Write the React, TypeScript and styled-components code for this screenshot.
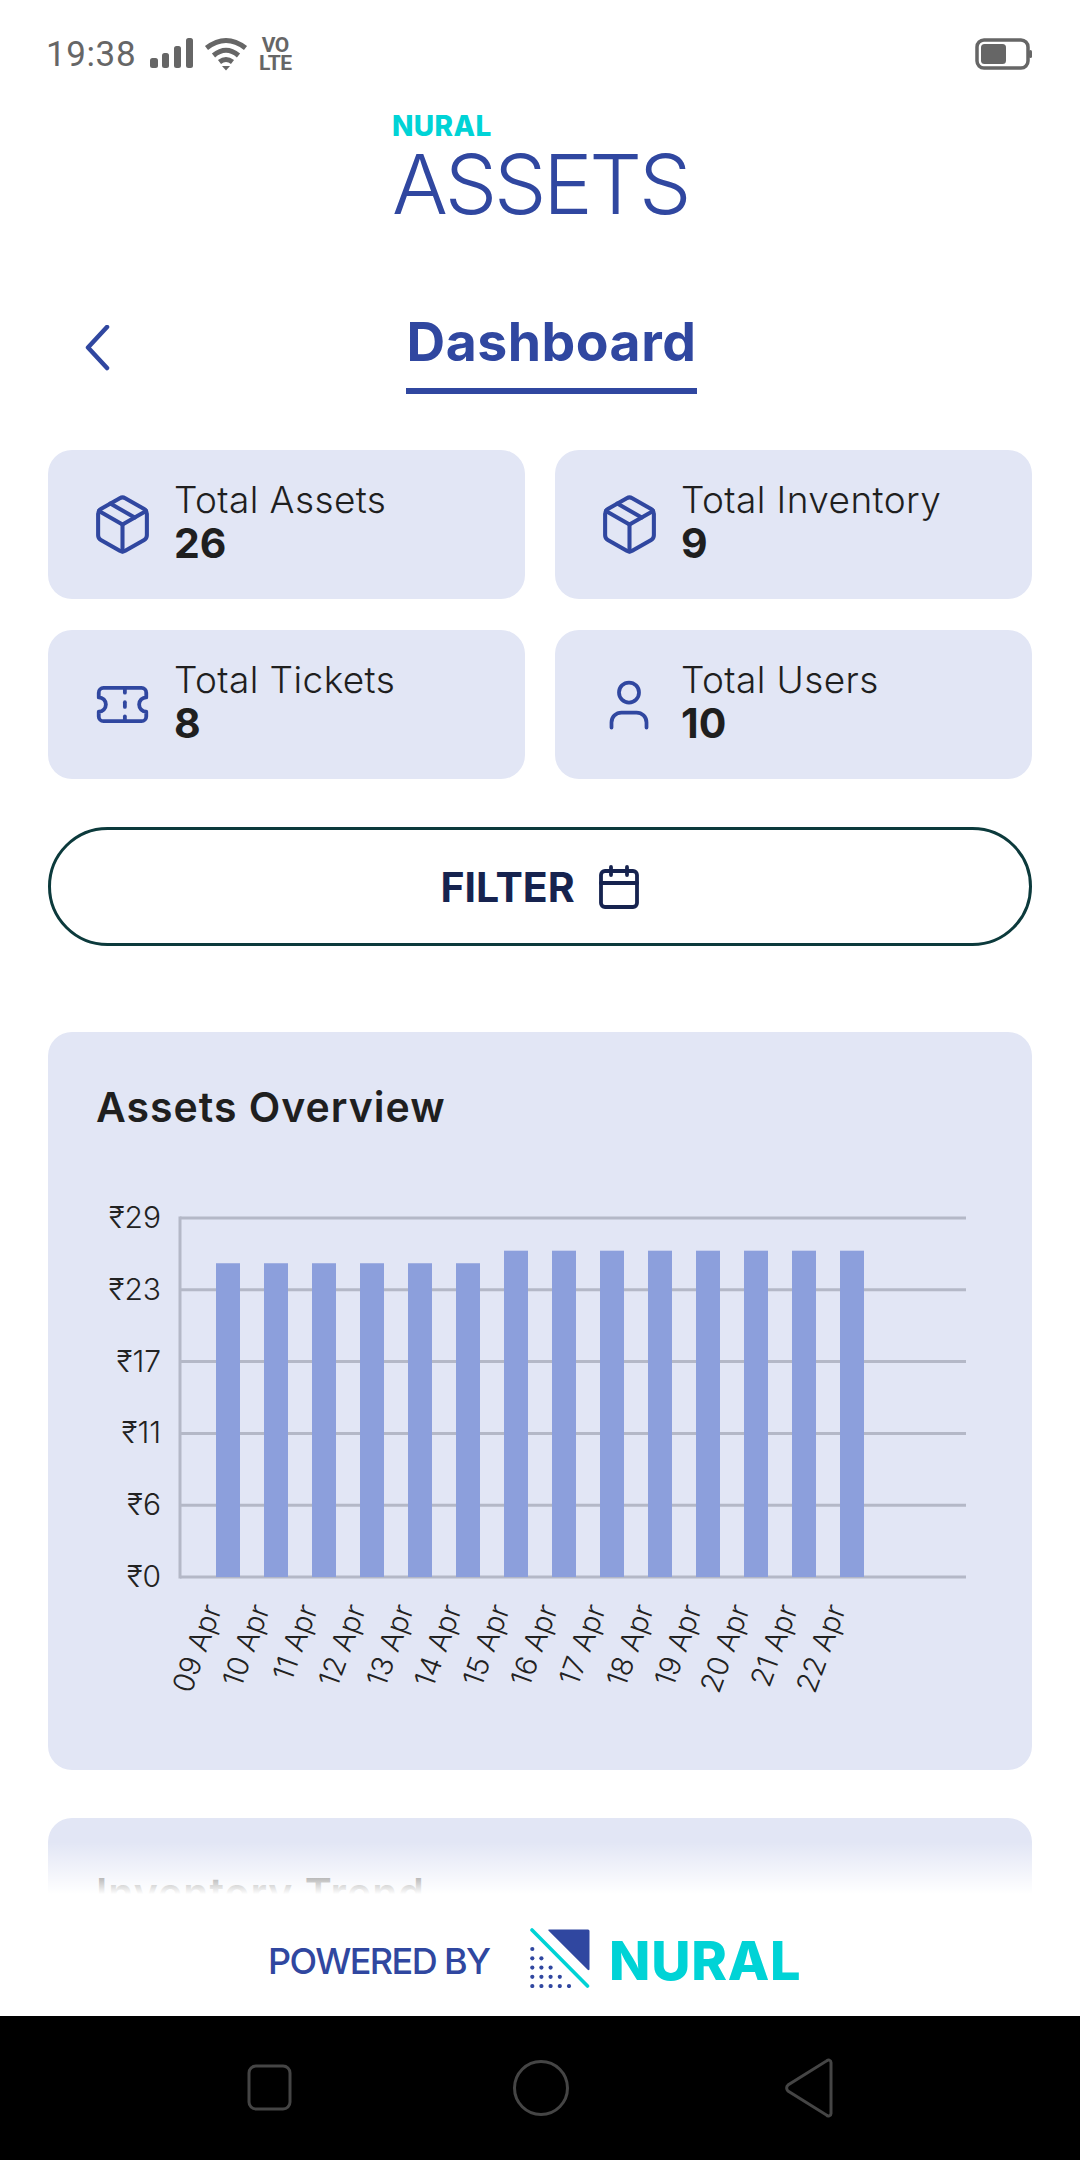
import React from "react";
import styled, { createGlobalStyle } from "styled-components";
import { Calendar, Package, Ticket, User } from "lucide-react";

const BLUE = "#3047a0";
const TEAL = "#00d3d6";

const GlobalStyle = createGlobalStyle`
  html, body { margin: 0; padding: 0; background: #fff; }
  * { box-sizing: border-box; }
  body { font-family: Inter, "Noto Sans", sans-serif; }
`;

const Shell = styled.div`
  width: 1080px;
  height: 2160px;
  display: flex;
  flex-direction: column;
  overflow: hidden;
  background: #fff;
`;

const Screen = styled.main`
  height: 1900px;
  flex: none;
  overflow: hidden;
`;

const StatusBar = styled.div`
  height: 108px;
  padding: 0 47px;
  display: flex;
  align-items: center;
  color: #666;
`;

const Time = styled.span`
  font-family: Roboto, sans-serif;
  font-size: 35px;
  width: 104px;
  margin-left: -1px;
  letter-spacing: 0.6px;
`;

const StatusIcon = styled.svg`
  display: block;
  margin-right: 10px;
`;

const Volte = styled.span`
  font-family: Roboto, sans-serif;
  font-weight: 700;
  font-size: 21px;
  line-height: 18px;
  margin-left: 1px;
  text-align: center;
  letter-spacing: -0.4px;
`;

const BatteryIcon = styled.svg`
  display: block;
  margin-left: auto;
`;

const Brand = styled.div`
  width: 296px;
  margin: 3px 0 0 392px;
  display: flex;
  flex-direction: column;
`;

const BrandTop = styled.span`
  color: ${TEAL};
  font-weight: 800;
  font-size: 28px;
  line-height: 31px;
  letter-spacing: 0.4px;
`;

const BrandName = styled.span`
  color: ${BLUE};
  font-weight: 300;
  font-size: 83px;
  line-height: 84px;
  letter-spacing: -3.2px;
`;

const TitleRow = styled.div`
  margin-top: 86px;
  height: 100px;
  padding-left: 84px;
  display: flex;
  align-items: flex-start;
`;

const BackIcon = styled.svg`
  display: block;
  margin: 13px 0 0 0;
`;

const Title = styled.h1`
  margin: 0 0 0 294px;
  padding-bottom: 16px;
  width: 291px;
  text-align: center;
  color: ${BLUE};
  font-size: 53.500px;
  line-height: 60px;
  font-weight: 700;
  letter-spacing: 0.5px;
  white-space: nowrap;
  border-bottom: 6px solid ${BLUE};
`;

const StatGrid = styled.section`
  margin-top: 38px;
  padding: 0 48px;
  display: grid;
  grid-template-columns: 477px 477px;
  grid-auto-rows: 149px;
  gap: 31px 30px;
`;

const StatCard = styled.div`
  background: #e2e6f5;
  border-radius: 24px;
  padding-left: 40px;
  display: flex;
  align-items: center;
  gap: 18px;
  color: #1f1f1f;
`;

const StatIcon = styled.div`
  width: 68px;
  display: flex;
  justify-content: center;
  color: ${BLUE};
`;

const StatText = styled.div`
  display: flex;
  flex-direction: column;
  margin-top: -5px;
`;

const StatLabel = styled.span`
  font-size: 37px;
  font-weight: 300;
  line-height: 42px;
  letter-spacing: 0.4px;
`;

const StatValue = styled.span`
  font-size: 41px;
  font-weight: 700;
  line-height: 45px;
`;

const FilterButton = styled.button`
  display: flex;
  align-items: center;
  justify-content: center;
  gap: 20px;
  width: 984px;
  height: 119px;
  margin: 48px 0 0 48px;
  padding: 0 0 0 3px;
  background: #fff;
  border: 3px solid #0c3a3c;
  border-radius: 60px;
  color: #16234f;
  font-family: inherit;
  font-size: 41px;
  font-weight: 700;
`;

const ChartCard = styled.section`
  width: 984px;
  margin: 86px 0 0 48px;
  padding: 50px 48px 50px;
  background: #e2e6f5;
  border-radius: 24px;

  & + & {
    margin-top: 48px;
  }
`;

const ChartTitle = styled.h2`
  margin: 0;
  color: #1f1f1f;
  font-size: 41px;
  line-height: 50px;
  font-weight: 600;
  letter-spacing: 1px;
`;

const ChartSvg = styled.svg`
  display: block;
  margin-top: 58px;
`;

const Footer = styled.footer`
  position: relative;
  height: 116px;
  flex: none;
  background: #fff;
  padding-left: 268px;
  display: flex;
  align-items: center;

  &::before {
    content: "";
    position: absolute;
    left: 0;
    right: 0;
    bottom: 100%;
    height: 58px;
    background: linear-gradient(to bottom, rgba(255, 255, 255, 0), #fff 90%);
  }
`;

const PoweredBy = styled.span`
  color: ${BLUE};
  font-size: 36px;
  font-weight: 500;
  letter-spacing: -1.6px;
  width: 262px;
  margin-top: 5px;
`;

const NuralWord = styled.span`
  margin: 4px 0 0 19px;
  color: ${TEAL};
  font-size: 54px;
  font-weight: 800;
  letter-spacing: 0.8px;
`;

const NavBar = styled.nav`
  flex: 1;
  background: #000;
  padding-left: 4px;
  display: flex;
  align-items: center;
  justify-content: center;
`;

const NavRow = styled.svg`
  display: block;
`;

const stats = [
  { label: "Total Assets", value: "26", icon: <Package size={65} strokeWidth={1.5} /> },
  { label: "Total Inventory", value: "9", icon: <Package size={65} strokeWidth={1.5} /> },
  { label: "Total Tickets", value: "8", icon: <Ticket size={57} strokeWidth={1.6} /> },
  { label: "Total Users", value: "10", icon: <User size={60} strokeWidth={1.5} /> },
];

const days = ["09", "10", "11", "12", "13", "14", "15", "16", "17", "18", "19", "20", "21", "22"];
const values = [25, 25, 25, 25, 25, 25, 26, 26, 26, 26, 26, 26, 26, 26];
const ticks = ["₹29", "₹23", "₹17", "₹11", "₹6", "₹0"];

// svg origin sits at x=96 on the page
const GRID_TOP = 28;
const GRID_STEP = 71.8;
const GRID_LEFT = 84;
const GRID_RIGHT = 870;
const GRID_BOTTOM = GRID_TOP + GRID_STEP * 5;
const UNIT = 12.55;

function AssetsChart() {
  return (
    <ChartSvg width={888} height={530}>
      {ticks.map((t, i) => (
        <g key={t}>
          <line
            x1={GRID_LEFT}
            x2={GRID_RIGHT}
            y1={GRID_TOP + i * GRID_STEP}
            y2={GRID_TOP + i * GRID_STEP}
            stroke="#b4b8c7"
            strokeWidth={3}
          />
          <text
            x={65}
            y={GRID_TOP + i * GRID_STEP + 10}
            textAnchor="end"
            fontFamily="Inter, sans-serif"
            fontWeight={300}
            fontSize={30}
            fill="#222"
          >
            {t}
          </text>
        </g>
      ))}
      <line x1={GRID_LEFT} x2={GRID_LEFT} y1={GRID_TOP - 1.5} y2={GRID_BOTTOM + 1.5} stroke="#b4b8c7" strokeWidth={3} />
      {values.map((v, i) => (
        <rect key={i} x={120 + i * 48} y={GRID_BOTTOM - v * UNIT} width={24} height={v * UNIT} fill="#8c9fdc" />
      ))}
      {days.map((d, i) => {
        const x = 126 + i * 48;
        const y = GRID_BOTTOM + 32;
        return (
          <text
            key={d}
            x={x}
            y={y}
            textAnchor="end"
            transform={`rotate(-70 ${x} ${y})`}
            fontFamily="Inter, sans-serif"
            fontWeight={300}
            fontSize={29}
            fill="#222"
          >
            {d} Apr
          </text>
        );
      })}
    </ChartSvg>
  );
}

function NuralMark() {
  const dots = [2.3, 11.4, 20.6, 29.8, 39];
  const rows = [21, 30.3, 39.6, 48.8, 58];
  return (
    <svg width={60} height={60} viewBox="0 0 60 60" style={{ display: "block", flex: "none" }}>
      <path d="M19 1.500H58a1.500 1.500 0 0 1 1.500 1.500V41a1 1 0 0 1-1.800 .7L18.400 2.600a.7 .7 0 0 1 .6-1.100Z" fill={BLUE} />
      <line x1={2} y1={2} x2={57.5} y2={58} stroke={TEAL} strokeWidth={3.6} strokeLinecap="round" />
      {rows.map((y, r) =>
        dots.slice(0, r + 1).map((x) => <circle key={`${r}-${x}`} cx={x} cy={y} r={2.1} fill={BLUE} />)
      )}
    </svg>
  );
}

export default function App() {
  return (
    <Shell>
      <GlobalStyle />
      <Screen>
        <StatusBar>
          <Time>19:38</Time>
          <StatusIcon width={44} height={32} viewBox="0 0 44 32" fill="currentColor">
            <rect x={0} y={20} width={8} height={10} rx={2.5} />
            <rect x={12} y={15} width={7} height={15} rx={2.5} />
            <rect x={24} y={8} width={7} height={22} rx={2.5} />
            <rect x={36} y={0} width={7} height={30} rx={2.5} />
          </StatusIcon>
          <StatusIcon width={44} height={34} viewBox="0 0 44 34" fill="none" stroke="currentColor" strokeWidth={5}>
            <path d="M2.500 11Q22-4 41.500 11" />
            <path d="M9.500 18.500Q22 8 34.500 18.500" />
            <path d="M15.500 25Q22 20 28.500 25" />
            <path d="M18 29h8l-4 4.500z" fill="currentColor" stroke="none" />
          </StatusIcon>
          <Volte>
            VO
            <br />
            LTE
          </Volte>
          <BatteryIcon width={58} height={32} viewBox="0 0 58 32">
            <rect x={2} y={2} width={51} height={28} rx={7} fill="none" stroke="currentColor" strokeWidth={3.5} />
            <rect x={6} y={6} width={25} height={20} rx={3.5} fill="currentColor" />
            <rect x={54} y={12} width={3} height={8} rx={1.5} fill="currentColor" />
          </BatteryIcon>
        </StatusBar>

        <Brand>
          <BrandTop>NURAL</BrandTop>
          <BrandName>ASSETS</BrandName>
        </Brand>

        <TitleRow>
          <BackIcon width={28} height={46} viewBox="0 0 28 46" fill="none" stroke={BLUE} strokeWidth={4.5} strokeLinecap="round" strokeLinejoin="round">
            <path d="M23 2 4 22.500 23 43" />
          </BackIcon>
          <Title>Dashboard</Title>
        </TitleRow>

        <StatGrid>
          {stats.map((s) => (
            <StatCard key={s.label}>
              <StatIcon>{s.icon}</StatIcon>
              <StatText>
                <StatLabel>{s.label}</StatLabel>
                <StatValue>{s.value}</StatValue>
              </StatText>
            </StatCard>
          ))}
        </StatGrid>

        <FilterButton>
          FILTER
          <Calendar size={48} strokeWidth={1.9} />
        </FilterButton>

        <ChartCard>
          <ChartTitle>Assets Overview</ChartTitle>
          <AssetsChart />
        </ChartCard>

        <ChartCard>
          <ChartTitle>Inventory Trend</ChartTitle>
        </ChartCard>
      </Screen>

      <Footer>
        <PoweredBy>POWERED BY</PoweredBy>
        <NuralMark />
        <NuralWord>NURAL</NuralWord>
      </Footer>

      <NavBar>
        <NavRow width={590} height={60} viewBox="0 0 590 60" fill="none" stroke="#454545" strokeWidth={3}>
          <rect x={2} y={8} width={41} height={43} rx={7} />
          <circle cx={294} cy={30} r={26.5} />
          <path d="M584 4.500v51a2.500 2.500 0 0 1-4.500 1.500L541 33a4 4 0 0 1 0-6l38.500-24a2.500 2.500 0 0 1 4.500 1.500Z" />
        </NavRow>
      </NavBar>
    </Shell>
  );
}
